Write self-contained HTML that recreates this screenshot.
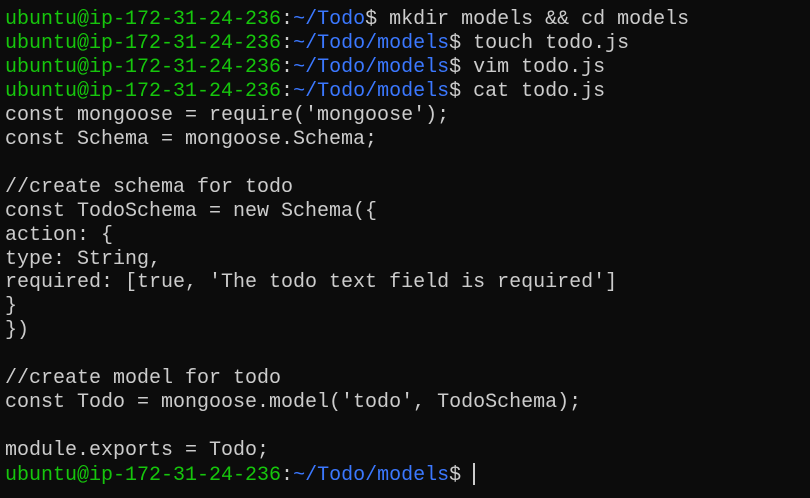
<!DOCTYPE html>
<html><head><style>
html,body{margin:0;padding:0;background:#0c0c0c;width:810px;height:498px;overflow:hidden}
pre{margin:0;padding:8px 0 0 5px;font-family:"Liberation Mono","DejaVu Sans Mono",monospace;font-size:20px;line-height:23.95px;color:#cccccc;white-space:pre}
.g{color:#16c60c}.b{color:#3b78ff}
.cur{display:inline-block;width:2px;height:22px;background:#cccccc;vertical-align:-5px}
</style></head><body><pre><span class="g">ubuntu@ip-172-31-24-236</span>:<span class="b">~/Todo</span>$ mkdir models &amp;&amp; cd models
<span class="g">ubuntu@ip-172-31-24-236</span>:<span class="b">~/Todo/models</span>$ touch todo.js
<span class="g">ubuntu@ip-172-31-24-236</span>:<span class="b">~/Todo/models</span>$ vim todo.js
<span class="g">ubuntu@ip-172-31-24-236</span>:<span class="b">~/Todo/models</span>$ cat todo.js
const mongoose = require('mongoose');
const Schema = mongoose.Schema;

//create schema for todo
const TodoSchema = new Schema({
action: {
type: String,
required: [true, 'The todo text field is required']
}
})

//create model for todo
const Todo = mongoose.model('todo', TodoSchema);

module.exports = Todo;
<span class="g">ubuntu@ip-172-31-24-236</span>:<span class="b">~/Todo/models</span>$ <span class="cur"></span></pre></body></html>
